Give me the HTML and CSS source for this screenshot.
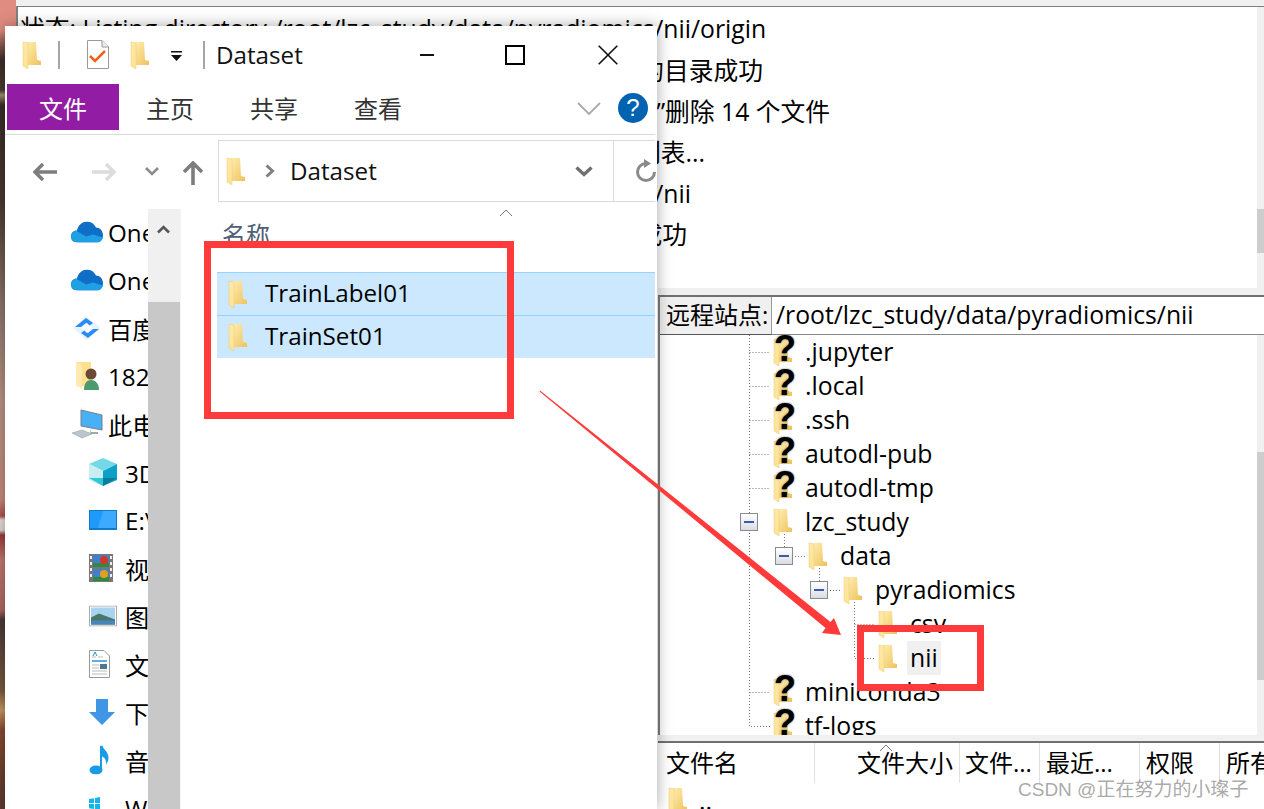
FILE: index.html
```html
<!DOCTYPE html>
<html lang="zh-CN">
<head>
<meta charset="utf-8">
<title>Dataset</title>
<link rel="stylesheet" href="styles.css">
</head>
<body>
<svg class="defs" width="0" height="0" aria-hidden="true">
  <defs>
    <linearGradient id="fg" x1="0" y1="0" x2="1" y2="1"><stop offset="0" stop-color="#ffedb0"/><stop offset="1" stop-color="#eec25c"/></linearGradient>
    <linearGradient id="flap" x1="0" y1="0" x2="0" y2="1"><stop offset="0" stop-color="#ffe9a6"/><stop offset="1" stop-color="#ffe394"/></linearGradient>
    <symbol id="folder" viewBox="0 0 20 28">
      <path d="M5 1h9l1 18 4 1v4H5z" fill="url(#fg)"/>
      <path d="M1 1l5 1v26l-5-3z" fill="url(#flap)"/>
      <path d="M1 1l5 1v26l-5-3z" fill="none" stroke="#e8c878" stroke-width=".5"/>
    </symbol>
    <symbol id="cloud" viewBox="0 0 32 21">
      <path d="M7 21C2 21 0 18 0 15c0-4 3-6 6-6 1-5 5-9 10-9 4 0 7 2 9 6 4 0 7 3 7 8 0 4-3 7-6 7z" fill="#0f6fc6"/>
      <path d="M7 21c-5 0-7-3-7-6 0-3 2-5 5-6l10 6 7-2 10 3c-1 3-3 5-6 5z" fill="#1fa0e6"/>
    </symbol>
  </defs>
</svg>

<main class="desktop">
  <div class="photo"></div>

  <section class="ftp">
    <div class="ftp-top"></div>
    <div class="log">
      <div class="log-line e1">状态: Listing directory /root/lzc_study/data/pyradiomics/nii/origin</div>
      <div class="log-line e2">状态: 读取“pyradiomics/nii/origin”的目录成功</div>
      <div class="log-line e3">状态: 已完成”删除 14 个文件</div>
      <div class="log-line e4">状态: 正在获取目录列表...</div>
      <div class="log-line e5">状态: Listing directory /root/lzc_study/data/nii</div>
      <div class="log-line e6">状态: 列出目录成功</div>
      <div class="track"><i class="thumb log-thumb"></i></div>
    </div>
    <div class="split"></div>
    <div class="site">
      <label class="site-label">远程站点:</label>
      <div class="site-input">/root/lzc_study/data/pyradiomics/nii</div>
    </div>
    <div class="tree">
      <svg class="guides" width="604" height="400" aria-hidden="true">
        <path d="M89.500 0V391.500H110M89.500 17.500H110M89.500 51.500H110M89.500 85.500H110M89.500 119.500H110M89.500 153.500H110M89.500 357.500H110M124.500 196V221.500H145M159.500 230V255.500H180M194.500 264V323.500H215M194.500 289.500H215" fill="none" stroke="#777" stroke-dasharray="1 2"/>
      </svg>
      <div class="track"><i class="thumb tree-thumb"></i></div>
      <div class="node l0"><span class="fi"><svg class="folder"><use href="#folder"/></svg><b class="unk">?</b></span><span>.jupyter</span></div>
      <div class="node l0"><span class="fi"><svg class="folder"><use href="#folder"/></svg><b class="unk">?</b></span><span>.local</span></div>
      <div class="node l0"><span class="fi"><svg class="folder"><use href="#folder"/></svg><b class="unk">?</b></span><span>.ssh</span></div>
      <div class="node l0"><span class="fi"><svg class="folder"><use href="#folder"/></svg><b class="unk">?</b></span><span>autodl-pub</span></div>
      <div class="node l0"><span class="fi"><svg class="folder"><use href="#folder"/></svg><b class="unk">?</b></span><span>autodl-tmp</span></div>
      <div class="node l0"><i class="minus"></i><span class="fi"><svg class="folder"><use href="#folder"/></svg></span><span>lzc_study</span></div>
      <div class="node l1"><i class="minus"></i><span class="fi"><svg class="folder"><use href="#folder"/></svg></span><span>data</span></div>
      <div class="node l2"><i class="minus"></i><span class="fi"><svg class="folder"><use href="#folder"/></svg></span><span>pyradiomics</span></div>
      <div class="node l3"><span class="fi"><svg class="folder"><use href="#folder"/></svg></span><span>csv</span></div>
      <div class="node l3"><span class="fi"><svg class="folder"><use href="#folder"/></svg></span><span class="sel">nii</span></div>
      <div class="node l0"><span class="fi"><svg class="folder"><use href="#folder"/></svg><b class="unk">?</b></span><span>miniconda3</span></div>
      <div class="node l0"><span class="fi"><svg class="folder"><use href="#folder"/></svg><b class="unk">?</b></span><span>tf-logs</span></div>
    </div>
    <div class="split2"></div>
    <div class="list">
      <div class="list-head">
        <span class="col c1">文件名</span>
        <span class="col c2">文件大小<svg class="sort" width="14" height="8" viewBox="0 0 14 8"><path d="M1 7l6-6 6 6" fill="none" stroke="#777"/></svg></span>
        <span class="col c3">文件...</span>
        <span class="col c4">最近...</span>
        <span class="col c5">权限</span>
        <span class="col c6">所有</span>
      </div>
      <div class="list-row"><svg class="folder"><use href="#folder"/></svg><span>..</span></div>
    </div>
  </section>

  <section class="explorer">
    <header class="titlebar">
      <svg class="folder"><use href="#folder"/></svg>
      <i class="tsep s1"></i>
      <svg class="qa-doc" width="22" height="29" viewBox="0 0 22 29"><path d="M.5.500H15l6.500 6.500V28.500H.5z" fill="#fff" stroke="#9a9a9a"/><path d="M15 .5V7h6.500" fill="#eee" stroke="#9a9a9a"/><path d="M3 16l5 5 10-10" fill="none" stroke="#f2601c" stroke-width="2.500"/></svg>
      <svg class="folder qa-folder"><use href="#folder"/></svg>
      <svg class="qa-drop" width="11" height="10" viewBox="0 0 11 10"><path d="M0 0h11v1.500H0zM0 4h11L5.500 10z" fill="#111"/></svg>
      <i class="tsep s2"></i>
      <span class="wintitle">Dataset</span>
      <div class="winbtns">
        <i class="wb-min"></i>
        <i class="wb-max"></i>
        <svg class="wb-close" width="20" height="20" viewBox="0 0 20 20"><path d="M.7.700l18.600 18.600M19.300.7L.7 19.300" stroke="#111" stroke-width="1.600"/></svg>
      </div>
    </header>
    <nav class="ribbon">
      <span class="tab file">文件</span>
      <span class="tab t1">主页</span>
      <span class="tab t2">共享</span>
      <span class="tab t3">查看</span>
      <svg class="rib-chev" width="24" height="13" viewBox="0 0 24 13"><path d="M1 1l11 11L23 1" fill="none" stroke="#aaa" stroke-width="1.800"/></svg>
      <span class="help">?</span>
    </nav>
    <div class="addr-row">
      <svg class="nav n-back" width="24" height="20" viewBox="0 0 24 20"><path d="M10 2l-8 8 8 8M2 10h22" fill="none" stroke="#7d7d7d" stroke-width="3.400"/></svg>
      <svg class="nav n-fwd" width="24" height="20" viewBox="0 0 24 20"><path d="M14 2l8 8-8 8M0 10h22" fill="none" stroke="#dcdcdc" stroke-width="3.400"/></svg>
      <svg class="nav n-down" width="14" height="9" viewBox="0 0 14 9"><path d="M1 1l6 6 6-6" fill="none" stroke="#8c8c8c" stroke-width="2.600"/></svg>
      <svg class="nav n-up" width="20" height="24" viewBox="0 0 20 24"><path d="M1 11l9-9 9 9M10 3v21" fill="none" stroke="#7d7d7d" stroke-width="3.600"/></svg>
      <div class="addr">
        <svg class="folder"><use href="#folder"/></svg>
        <svg class="crumb" width="10" height="14" viewBox="0 0 10 14"><path d="M1.500 1.500l6 5.500-6 5.500" fill="none" stroke="#808080" stroke-width="3"/></svg>
        <span class="addr-text">Dataset</span>
        <svg class="addr-chev" width="18" height="11" viewBox="0 0 18 11"><path d="M1.500 1.500l7.500 7 7.500-7" fill="none" stroke="#707070" stroke-width="3.400"/></svg>
        <i class="addr-sep"></i>
        <svg class="refresh" width="24" height="24" viewBox="0 0 24 24"><path d="M12 4.500A8.500 8.500 0 1 0 20.500 13" fill="none" stroke="#8a8a8a" stroke-width="3"/><path d="M10 0v9l7-4.500z" fill="#8a8a8a"/></svg>
      </div>
    </div>
    <div class="panes">
      <aside class="side">
        <div class="side-row"><svg class="ic" width="32" height="21"><use href="#cloud"/></svg><span>OneDrive</span></div>
        <div class="side-row"><svg class="ic" width="32" height="21"><use href="#cloud"/></svg><span>OneDrive - Personal</span></div>
        <div class="side-row">
          <svg class="ic" width="32" height="28" viewBox="0 0 32 28"><path d="M2 14L15 2l15 12-15 12z" fill="#cfe9ff" opacity=".5"/><path d="M4 13l11-9 7 5-4 3-3-3-5 4zM28 15L17 24l-7-5 4-3 3 3 5-4z" fill="#2a8cf4"/><path d="M16 9l5 5-5 5-5-5z" fill="#fff"/></svg>
          <span>百度网盘同步空间</span></div>
        <div class="side-row">
          <svg class="ic" width="32" height="30" viewBox="0 0 32 30"><path d="M5 1h15v24H5z" fill="#ffe08c"/><path d="M5 1l6 3v24l-6-4z" fill="#ffeab0"/><circle cx="20" cy="13" r="5.500" fill="#6a4a34"/><path d="M13 29c0-7 3-10 7-10s8 3 8 10z" fill="#4d9a6e"/></svg>
          <span>18252027</span></div>
        <div class="side-row">
          <svg class="ic" width="32" height="30" viewBox="0 0 32 30"><path d="M10 1l21 5v15l-21-4z" fill="#48b0f4" stroke="#78808a"/><path d="M20 19v4h7v2h-8z" fill="#9aa"/><path d="M1 24l10-3 10 4-10 4z" fill="#bcc4cc" stroke="#9aa2aa" stroke-width=".6"/></svg>
          <span>此电脑</span></div>
        <div class="side-row sub">
          <svg class="ic" width="28" height="28" viewBox="0 0 28 28"><path d="M14 0l14 6-14 7L0 6z" fill="#74d8e6"/><path d="M0 6l14 7v15L0 22z" fill="#c8eef2"/><path d="M28 6L14 13v15l14-6z" fill="#0aa0c8"/><path d="M0 20l14 8v-8z" fill="#2fc7da"/><path d="M28 20l-14 8v-8z" fill="#0b7d96"/></svg>
          <span>3D 对象</span></div>
        <div class="side-row sub">
          <svg class="ic" width="28" height="20" viewBox="0 0 28 20"><rect width="28" height="20" fill="#0d7cc4"/><rect x="1" y="1" width="26" height="17" fill="#1e9bfa"/><path d="M14 1h13v17H9z" fill="#3cabff"/></svg>
          <span>E:\</span></div>
        <div class="side-row sub">
          <svg class="ic" width="24" height="28" viewBox="0 0 24 28"><rect width="24" height="28" fill="#777"/><rect x="1" y="2" width="2" height="3" fill="#eee"/><rect x="1" y="8" width="2" height="3" fill="#eee"/><rect x="1" y="14" width="2" height="3" fill="#eee"/><rect x="1" y="20" width="2" height="3" fill="#eee"/><rect x="21" y="2" width="2" height="3" fill="#eee"/><rect x="21" y="8" width="2" height="3" fill="#eee"/><rect x="21" y="14" width="2" height="3" fill="#eee"/><rect x="21" y="20" width="2" height="3" fill="#eee"/><rect x="4" y="1" width="16" height="12" fill="#3f7fd0"/><rect x="4" y="15" width="16" height="12" fill="#3f7fd0"/><path d="M4 9h16v4H4zM4 23h16v4H4z" fill="#2f8a3c"/><circle cx="15" cy="6" r="4" fill="#d7342a"/><circle cx="15" cy="20" r="4" fill="#e0a020"/></svg>
          <span>视频</span></div>
        <div class="side-row sub">
          <svg class="ic" width="28" height="21" viewBox="0 0 28 21"><rect x=".5" y=".5" width="27" height="20" fill="#fff" stroke="#aaa"/><rect x="2" y="2" width="24" height="17" fill="#a8d4f0"/><path d="M2 12l8-4 8 3 8 3v5H2z" fill="#48786a"/><rect x="2" y="15" width="24" height="4" fill="#4a84bc"/></svg>
          <span>图片</span></div>
        <div class="side-row sub">
          <svg class="ic" width="21" height="28" viewBox="0 0 21 28"><path d="M.5.500H15L20.500 6V27.500H.5z" fill="#fff" stroke="#999"/><path d="M3 11h15" stroke="#2a90d8" stroke-width="1.500"/><path d="M3 7h4M9 7h5M3 15h7M3 18h7M3 21h15M3 24h15" stroke="#bbb"/><rect x="11" y="14" width="7" height="5" fill="#4a7a90"/><path d="M4 6l2-4 2 4" fill="none" stroke="#2a90d8"/></svg>
          <span>文档</span></div>
        <div class="side-row sub">
          <svg class="ic" width="26" height="26" viewBox="0 0 26 26"><path d="M7 0h12v13h7L13 26 0 13h7z" fill="#3f96e4"/></svg>
          <span>下载</span></div>
        <div class="side-row sub">
          <svg class="ic" width="20" height="29" viewBox="0 0 20 29"><ellipse cx="7" cy="24.500" rx="6.500" ry="4.500" fill="#1a9be8"/><path d="M11 0h2.500c.5 4 6 6 6 12 0 3-1 5-2.500 7 .5-4-1-7-4-8v14h-2z" fill="#1a9be8"/></svg>
          <span>音乐</span></div>
        <div class="side-row sub">
          <svg class="ic" width="28" height="24" viewBox="0 0 28 24"><path d="M0 3l5-.8V7H0zM6 2l5-1v6H6zM0 8h5v5l-5-.8zM6 8h5v6l-5-1z" fill="#12b5ee"/></svg>
          <span>Windows (C:)</span></div>
      </aside>
      <div class="vscroll">
        <div class="vs-up"><svg width="13" height="9" viewBox="0 0 13 9"><path d="M1 7.500l5.500-5.500 5.500 5.500" fill="none" stroke="#555" stroke-width="2.600"/></svg></div>
        <div class="vs-thumb"></div>
      </div>
      <div class="content">
        <div class="col-head">
          <svg class="name-sort" width="14" height="8" viewBox="0 0 14 8"><path d="M1 7l6-6 6 6" fill="none" stroke="#777"/></svg>
          <span class="name-col">名称</span>
        </div>
        <div class="item first"><svg class="folder"><use href="#folder"/></svg><span>TrainLabel01</span></div>
        <div class="item"><svg class="folder"><use href="#folder"/></svg><span>TrainSet01</span></div>
      </div>
    </div>
  </section>

  <div class="mark m1"></div>
  <div class="mark m2"></div>
  <svg class="arrow" width="1264" height="809" aria-hidden="true"><path d="M540 390.500L830.500 622 834 618 841 635 822 633 825.500 628 539.500 391.500z" fill="#ff3a3a"/></svg>
  <div class="watermark">CSDN @正在努力的小璨子</div>
</main>
</body>
</html>
```

FILE: styles.css
```css
* { box-sizing: border-box; }
html, body { margin: 0; padding: 0; background: #fff; }
body { width: 1264px; height: 809px; overflow: hidden; font-family: "Open Sans", "Noto Sans CJK SC", sans-serif; color: #000; }
.defs { position: absolute; }
.desktop { position: relative; width: 1264px; height: 809px; overflow: hidden; }
.photo { position: absolute; left: 0; top: 0; width: 16px; height: 809px; background: linear-gradient(#e08c80 0, #e08c80 30px, #8a5a50 45px, #3e2e2a 60px, #4a3a32 90px, #a89070 95px, #3a2c28 105px, #4a3830 200px, #8a7468 300px, #bb9488 400px, #c78c7c 500px, #b05050 516px, #e8e0dc 520px, #e4d8d4 530px, #9a3a3a 535px, #c47a70 560px, #b06a60 610px, #4a3a36 620px, #7a5a40 690px, #c89a60 710px, #8a4a30 730px, #5a3a30 809px); }

/* FTP client window */
.ftp { position: absolute; left: 16px; top: 0; right: 0; bottom: 0; display: flex; flex-direction: column; background: #fff; font-size: 24.75px; line-height: 34px; }
.ftp-top { height: 6px; background: #f0f0f0; flex: none; }
.log { position: relative; height: 282px; flex: none; border-top: 1px solid #808080; border-left: 2px solid #808080; padding: 6px 0 0 2px; overflow: hidden; }
.log-line { height: 41px; line-height: 32px; white-space: nowrap; display: flex; }
.log-line.e1 { height: 42px; }
.log-line.e2 { width: 743px; justify-content: flex-end; }
.log-line.e3 { width: 810px; justify-content: flex-end; }
.log-line.e4 { width: 685px; justify-content: flex-end; }
.log-line.e5 { width: 671px; justify-content: flex-end; }
.log-line.e6 { width: 667px; justify-content: flex-end; }
.track { position: absolute; right: 0; top: 0; bottom: 0; width: 7px; background: #f0f0f0; }
.thumb { position: absolute; left: 0; top: 0; width: 7px; background: #cdcdcd; }
.log-thumb { top: 202px; height: 44px; }
.tree-thumb { top: 117px; height: 228px; }
.split { height: 7px; flex: none; background: #f0f0f0; margin-left: 642px; }
.site { height: 40px; flex: none; display: flex; margin-left: 642px; border-left: 2px solid #808080; border-top: 2px solid #707070; }
.site-label { width: 112px; flex: none; background: #f0f0f0; border-right: 1px solid #9a9a9a; border-bottom: 1px solid #555; padding-left: 6px; line-height: 36px; font-size: 24px; white-space: nowrap; }
.site-input { flex: 1; padding-left: 4px; line-height: 36px; border-bottom: 1px solid #888; white-space: nowrap; }
.tree { position: relative; height: 400px; flex: none; overflow: hidden; margin-left: 642px; border-left: 2px solid #808080; }
.guides { position: absolute; left: 0; top: 0; }
.node { position: relative; display: flex; align-items: center; height: 34px; white-space: nowrap; }
.l0 { padding-left: 113px; }
.l1 { padding-left: 148px; }
.l2 { padding-left: 183px; }
.l3 { padding-left: 218px; }
.fi { position: relative; width: 32px; height: 28px; flex: none; }
.folder { display: block; width: 20px; height: 28px; flex: none; }
.unk { position: absolute; left: 1px; top: -7px; font: 700 36px/36px "Liberation Sans", sans-serif; color: #000; text-shadow: 0 0 2px #555; }
.minus { position: absolute; width: 18px; height: 18px; top: 8px; border: 1px solid #8a8a8a; background: linear-gradient(#fff, #d8dce4); }
.minus::after { content: ""; position: absolute; left: 3px; top: 7px; width: 10px; height: 2px; background: #3f5aa8; }
.l0 .minus { left: 80px; }
.l1 .minus { left: 115px; }
.l2 .minus { left: 150px; }
.sel { background: #f0f0f0; padding: 0 3px; margin-left: -3px; height: 34px; }
.split2 { height: 6px; flex: none; background: #f0f0f0; margin-left: 642px; }
.list { flex: 1; margin-left: 642px; border-top: 2px solid #707070; overflow: hidden; }
.list-head { position: relative; display: flex; height: 41px; line-height: 40px; white-space: nowrap; font-size: 24px; }
.col { flex: none; position: relative; height: 40px; border-right: 1px solid #e0e0e0; overflow: hidden; padding-left: 8px; }
.c1 { width: 157px; }
.c2 { width: 145px; padding-left: 42px; overflow: visible; }
.c3 { width: 80px; padding-left: 5px; }
.c4 { width: 100px; padding-left: 6px; }
.c5 { width: 80px; padding-left: 6px; }
.c6 { border-right: 0; flex: 1; padding-left: 6px; }
.sort { position: absolute; left: 64px; top: 1px; }
.list-row { display: flex; align-items: flex-start; gap: 11px; padding: 3px 0 0 10px; line-height: 28px; }
.list-row .folder { height: 28px; }

/* Explorer window */
.explorer { position: absolute; left: 5px; top: 26px; width: 652px; height: 783px; background: #fff; box-shadow: 0 0 14px rgba(0,0,0,.35); display: flex; flex-direction: column; overflow: hidden; font-size: 24.2px; }
.titlebar { height: 58px; flex: none; display: flex; align-items: center; padding-left: 17px; position: relative; padding-bottom: 1px; }
.tsep { width: 2px; height: 28px; background: #a5a5a5; flex: none; }
.s1 { margin-left: 16px; }
.qa-doc { margin-left: 27px; flex: none; }
.qa-folder { margin-left: 21px; }
.qa-drop { margin-left: 21px; margin-top: 2px; flex: none; }
.s2 { margin-left: 21px; }
.wintitle { margin-left: 11px; line-height: 30px; color: #111; }
.winbtns { position: absolute; right: 39px; top: 19px; display: flex; align-items: center; }
.wb-min { display: block; width: 14px; height: 2px; background: #111; margin-right: 71px; }
.wb-max { display: block; width: 20px; height: 20px; border: 2px solid #000; margin-right: 73px; }
.wb-close { display: block; }
.ribbon { position: relative; height: 51px; flex: none; display: flex; align-items: flex-start; padding-left: 2px; border-bottom: 1px solid #d9d9d9; margin-right: 2px; }
.tab { display: block; height: 46px; line-height: 50px; font-size: 24px; color: #333; flex: none; text-align: center; }
.file { width: 112px; background: #921ca3; color: #fff; }
.t1 { width: 102px; }
.t2 { width: 106px; }
.t3 { width: 102px; }
.rib-chev { position: absolute; left: 572px; top: 18px; }
.help { position: absolute; left: 613px; top: 9px; width: 30px; height: 30px; border-radius: 50%; background: #0063b1; color: #fff; text-align: center; font: 24px/30px "Liberation Sans", sans-serif; }
.addr-row { height: 74px; flex: none; position: relative; padding: 5px 2px 5px 213px; }
.nav { position: absolute; }
.n-back { left: 28px; top: 27px; }
.n-fwd { left: 87px; top: 27px; }
.n-down { left: 140px; top: 32px; }
.n-up { left: 178px; top: 26px; }
.addr { position: relative; height: 62px; display: flex; align-items: center; border: 1px solid #d9d9d9; border-right: 0; padding-left: 7px; }
.addr-text { margin: 0 0 2px 15px; color: #111; }
.crumb { margin-left: 19px; flex: none; }
.addr-chev { position: absolute; left: 356px; top: 25px; }
.addr-sep { position: absolute; left: 394px; top: 0; width: 1px; height: 60px; background: #d9d9d9; }
.refresh { position: absolute; left: 415px; top: 18px; }
.panes { flex: 1; display: flex; min-height: 0; }
.side { width: 143px; flex: none; overflow: hidden; }
.side-row { display: flex; align-items: center; height: 48px; white-space: nowrap; padding-left: 66px; position: relative; top: -1px; }
.side-row .ic { position: absolute; left: 66px; top: 50%; transform: translateY(-50%); }
.side-row span { margin-left: 37px; }
.side-row.sub span { margin-left: 54px; }
.side-row.sub .ic { left: 84px; }
.vscroll { width: 33px; flex: none; display: flex; flex-direction: column; margin-right: 5px; border-right: 1px solid #f4f4f4; }
.vs-up { height: 93px; background: #f0f0f0; display: flex; justify-content: center; padding-top: 16px; padding-right: 1px; }
.vs-thumb { flex: 1; background: #c8c8c8; }
.content { flex: 1; padding-left: 31px; min-width: 0; margin-right: 2px; }
.col-head { position: relative; height: 63px; }
.name-col { position: absolute; left: 5px; top: 7px; color: #4f5f78; font-size: 24px; }
.name-sort { position: absolute; left: 282px; top: 0; }
.item { display: flex; align-items: center; height: 42px; background: #cce8ff; padding-left: 11px; white-space: nowrap; }
.item span { margin-bottom: 3px; }
.item .folder { width: 20px; margin-right: 17px; }
.item.first { border-top: 1px solid #99d1ff; border-bottom: 1px solid #99d1ff; height: 44px; }

/* Annotations */
.mark { position: absolute; border: 7px solid #ff3a3a; }
.m1 { left: 204px; top: 241px; width: 310px; height: 178px; }
.m2 { left: 857px; top: 625px; width: 127px; height: 66px; }
.arrow { position: absolute; left: 0; top: 0; }
.watermark { position: absolute; left: 1018px; top: 778px; font: 19px/24px "Liberation Sans", "Noto Sans CJK SC", sans-serif; color: rgba(120,120,120,.65); white-space: nowrap; }
```
